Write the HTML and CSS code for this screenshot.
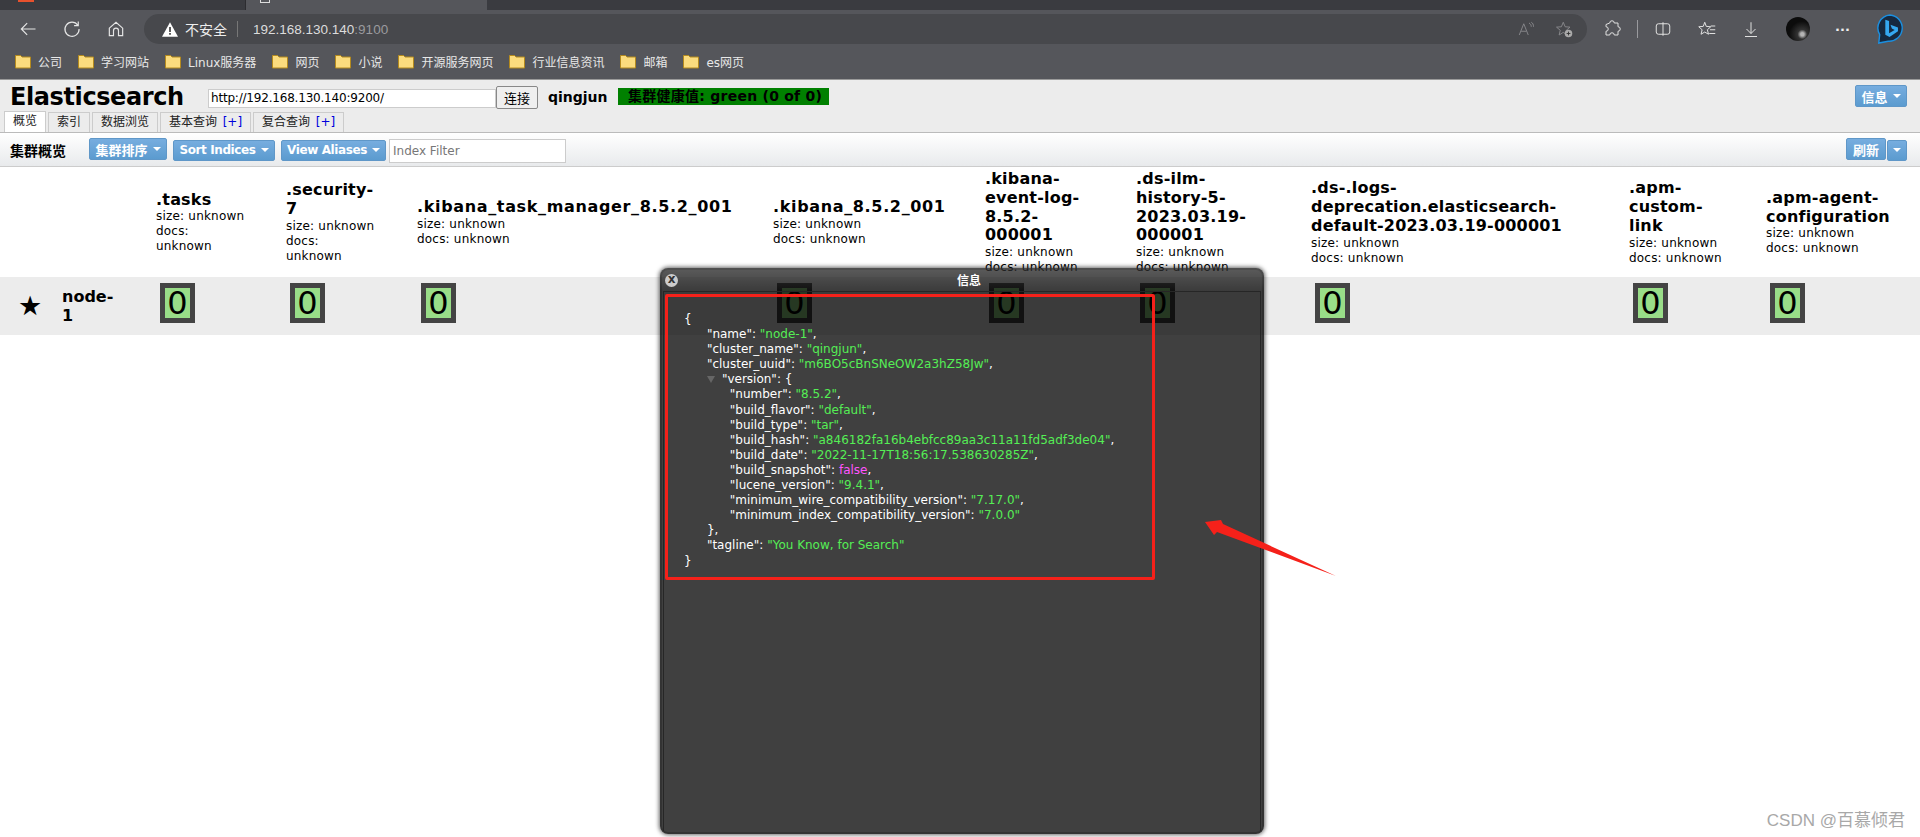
FILE: index.html
```html
<!DOCTYPE html>
<html lang="zh">
<head>
<meta charset="utf-8">
<title>Elasticsearch head</title>
<link rel="stylesheet" href="styles.css">
</head>
<body>
<div class="browser">
  <div class="tabstrip">
    <div class="tab-left"><span class="fav-red"></span></div>
    <div class="tab-active"><span class="fav-white"></span></div>
    <div class="tab-next"></div>
  </div>
  <div class="navbar">
    <svg class="nav-ico" viewBox="0 0 24 24"><path d="M21 12H4M11 5l-7 7 7 7"/></svg>
    <svg class="nav-ico" viewBox="0 0 24 24"><path d="M19 7.500A8.500 8.500 0 1 0 20.500 12M19.500 3v5h-5"/></svg>
    <svg class="nav-ico" viewBox="0 0 24 24"><path d="M4 11l8-7 8 7v9h-5v-6a3 3 0 0 0-6 0v6H4z"/></svg>
    <div class="omnibox">
      <svg class="warn" viewBox="0 0 20 18"><path d="M10 0l10 18H0z" fill="#fff"/><path d="M9 6h2v6H9zM9 13.500h2v2H9z" fill="#333"/></svg>
      <span class="insecure">不安全</span>
      <span class="omni-sep"></span>
      <span class="addr">192.168.130.140<span class="port">:9100</span></span>
      <span class="omni-grow"></span>
      <svg class="omni-ico" viewBox="0 0 24 24"><path d="M3 20L9 5l6 15M5.500 15h7M16 4c2 1 3 3 3 5M19 3c2 1 3 3 3 6"/></svg>
      <svg class="omni-ico omni-star" viewBox="0 0 24 24"><path d="M11 3l2.500 6 6.500.5-5 4.200L16.500 20 11 16.500 5.500 20l1.500-6.300-5-4.200L8.500 9z"/><circle cx="18" cy="18" r="5" fill="#aaa" stroke="none"/><path d="M18 15.500v5M15.500 18h5" stroke="#333"/></svg>
    </div>
    <div class="tools">
      <svg class="tool" viewBox="0 0 24 24"><path d="M9 4a3 3 0 0 1 6 0h5v5a3 3 0 0 1 0 6v5h-5a3 3 0 0 0-6 0H4v-5a3 3 0 0 0 0-6V6z"/></svg>
      <span class="tool-sep"></span>
      <svg class="tool" viewBox="0 0 24 24"><path d="M12 3v18M6 5h12a3 3 0 0 1 3 3v8a3 3 0 0 1-3 3H6a3 3 0 0 1-3-3V8a3 3 0 0 1 3-3z"/></svg>
      <svg class="tool" viewBox="0 0 24 24"><path d="M9 3l2 5.500 6 .5-4.500 4 1.500 6L9 16l-5 3 1.500-6L1 9l6-.5zM17 8h6M16 13h7M15 18h8"/></svg>
      <svg class="tool" viewBox="0 0 24 24"><path d="M12 3v15M6 12l6 6 6-6M4 22h16"/></svg>
      <span class="avatar"></span>
      <span class="dots">···</span>
      <svg class="bing" viewBox="0 0 32 32"><path d="M16 1a14 14 0 1 1-2 28l-10 2 1-9A14 14 0 0 1 16 1z" fill="#16293f" stroke="#1b8fe0" stroke-width="1.500"/><path d="M11 6l4 1.500v13l6-3.500-3-1.500-1.500-4 8 3v4l-9 6-4.500-2.500z" fill="#35a8f0"/></svg>
    </div>
  </div>
  <div class="bookmarks">
    <div class="bm"><svg class="folder" viewBox="0 0 16 16"><path d="M.5 4V2.500h5l1.500 1.500h8.500v11H.5z"/></svg><span>公司</span></div>
    <div class="bm"><svg class="folder" viewBox="0 0 16 16"><path d="M.5 4V2.500h5l1.500 1.500h8.500v11H.5z"/></svg><span>学习网站</span></div>
    <div class="bm"><svg class="folder" viewBox="0 0 16 16"><path d="M.5 4V2.500h5l1.500 1.500h8.500v11H.5z"/></svg><span>Linux服务器</span></div>
    <div class="bm"><svg class="folder" viewBox="0 0 16 16"><path d="M.5 4V2.500h5l1.500 1.500h8.500v11H.5z"/></svg><span>网页</span></div>
    <div class="bm"><svg class="folder" viewBox="0 0 16 16"><path d="M.5 4V2.500h5l1.500 1.500h8.500v11H.5z"/></svg><span>小说</span></div>
    <div class="bm"><svg class="folder" viewBox="0 0 16 16"><path d="M.5 4V2.500h5l1.500 1.500h8.500v11H.5z"/></svg><span>开源服务网页</span></div>
    <div class="bm"><svg class="folder" viewBox="0 0 16 16"><path d="M.5 4V2.500h5l1.500 1.500h8.500v11H.5z"/></svg><span>行业信息资讯</span></div>
    <div class="bm"><svg class="folder" viewBox="0 0 16 16"><path d="M.5 4V2.500h5l1.500 1.500h8.500v11H.5z"/></svg><span>邮箱</span></div>
    <div class="bm"><svg class="folder" viewBox="0 0 16 16"><path d="M.5 4V2.500h5l1.500 1.500h8.500v11H.5z"/></svg><span>es网页</span></div>
  </div>
</div>

<div class="app">
  <div class="head">
    <div class="head-top">
      <h1 class="brand">Elasticsearch</h1>
      <input class="url" type="text" value="http://192.168.130.140:9200/">
      <button class="connect">连接</button>
      <span class="cluster">qingjun</span>
      <span class="health">集群健康值: green (0 of 0)</span>
      <span class="grow"></span>
      <span class="btn btn-info">信息<i class="caret"></i></span>
    </div>
    <div class="tabs">
      <span class="tab active">概览</span>
      <span class="tab">索引</span>
      <span class="tab">数据浏览</span>
      <span class="tab">基本查询 <b class="plus">[+]</b></span>
      <span class="tab">复合查询 <b class="plus">[+]</b></span>
    </div>
  </div>
  <div class="toolbar">
    <span class="tb-label">集群概览</span>
    <span class="btn btn-first">集群排序<i class="caret"></i></span>
    <span class="btn btn-sort">Sort Indices<i class="caret"></i></span>
    <span class="btn btn-alias">View Aliases<i class="caret"></i></span>
    <input class="filter" type="text" placeholder="Index Filter">
    <span class="grow"></span>
    <span class="btn btn-refresh">刷新</span>
    <span class="btn btn-drop"><i class="caret"></i></span>
  </div>
  <table class="nodes">
    <colgroup>
      <col class="c0"><col class="c1"><col class="c2"><col class="c3"><col class="c4"><col class="c5"><col class="c6"><col class="c7"><col class="c8"><col class="c9"><col class="c10">
    </colgroup>
    <thead>
      <tr>
        <th colspan="2"></th>
        <th><h3>.tasks</h3><p>size: unknown<br>docs:<br>unknown</p></th>
        <th><h3>.security-<br>7</h3><p>size: unknown<br>docs:<br>unknown</p></th>
        <th><h3 class="wide">.kibana_task_manager_8.5.2_001</h3><p>size: unknown<br>docs: unknown</p></th>
        <th><h3 class="wide">.kibana_8.5.2_001</h3><p>size: unknown<br>docs: unknown</p></th>
        <th><h3>.kibana-<br>event-log-<br>8.5.2-<br>000001</h3><p>size: unknown<br>docs: unknown</p></th>
        <th><h3>.ds-ilm-<br>history-5-<br>2023.03.19-<br>000001</h3><p>size: unknown<br>docs: unknown</p></th>
        <th><h3>.ds-.logs-<br>deprecation.elasticsearch-<br>default-2023.03.19-000001</h3><p>size: unknown<br>docs: unknown</p></th>
        <th><h3>.apm-<br>custom-<br>link</h3><p>size: unknown<br>docs: unknown</p></th>
        <th><h3>.apm-agent-<br>configuration</h3><p>size: unknown<br>docs: unknown</p></th>
      </tr>
    </thead>
    <tbody>
      <tr>
        <td class="star">★</td>
        <td class="node">node-<br>1</td>
        <td><span class="shard">0</span></td>
        <td><span class="shard">0</span></td>
        <td><span class="shard">0</span></td>
        <td><span class="shard">0</span></td>
        <td><span class="shard">0</span></td>
        <td><span class="shard">0</span></td>
        <td><span class="shard">0</span></td>
        <td><span class="shard">0</span></td>
        <td><span class="shard">0</span></td>
      </tr>
    </tbody>
  </table>
</div>

<div class="dialog">
  <div class="dialog-title"><span class="close">x</span><span class="dialog-name">信息</span></div>
  <div class="dialog-body">
    <div class="red-box"></div>
<pre class="json">{
      "name": <s>"node-1"</s>,
      "cluster_name": <s>"qingjun"</s>,
      "cluster_uuid": <s>"m6BO5cBnSNeOW2a3hZ58Jw"</s>,
      <i class="tri"></i>"version": {
            "number": <s>"8.5.2"</s>,
            "build_flavor": <s>"default"</s>,
            "build_type": <s>"tar"</s>,
            "build_hash": <s>"a846182fa16b4ebfcc89aa3c11a11fd5adf3de04"</s>,
            "build_date": <s>"2022-11-17T18:56:17.538630285Z"</s>,
            "build_snapshot": <u>false</u>,
            "lucene_version": <s>"9.4.1"</s>,
            "minimum_wire_compatibility_version": <s>"7.17.0"</s>,
            "minimum_index_compatibility_version": <s>"7.0.0"</s>
      },
      "tagline": <s>"You Know, for Search"</s>
}</pre>
  </div>
</div>

<svg class="arrow" viewBox="0 0 140 64"><polygon points="1,6 17,4 19,8 132,60 13,16 10,19"/></svg>
<div class="mark">CSDN @百慕倾君</div>
</body>
</html>
```
FILE: styles.css
```css
* { box-sizing: border-box; }
html, body { margin: 0; padding: 0; height: 837px; overflow: hidden; background: #fff; }
body { font-family: "DejaVu Sans", "Noto Sans CJK SC", sans-serif; font-size: 12px; color: #000; position: relative; }

/* browser chrome */
.browser { background: #55565b; height: 80px; border-bottom: 1px solid #9a9a9a; }
.tabstrip { height: 10px; background: #3a3b40; display: flex; }
.tab-left { width: 246px; padding-left: 18px; border-right: 1px solid #2c2c30; }
.fav-red { display: block; width: 16px; height: 2px; background: #e8512d; }
.tab-active { width: 241px; background: #55565b; padding-left: 14px; }
.fav-white { display: block; width: 10px; height: 3px; border: 1px solid #ddd; border-top: 0; }
.tab-next { flex: 1; }
.navbar { height: 38px; display: flex; align-items: center; padding: 0 0 0 18px; }
.nav-ico { width: 20px; height: 20px; fill: none; stroke: #e6e6e6; stroke-width: 1.4; margin-right: 24px; flex: none; }
.omnibox { margin-left: -6px; width: 1443px; height: 30px; background: #47484c; border-radius: 15px; display: flex; align-items: center; padding: 0 12px 0 18px; flex: none; }
.warn { width: 16px; height: 15px; flex: none; }
.insecure { margin-left: 7px; color: #eee; font-size: 14px; }
.omni-sep { width: 1px; height: 16px; background: #777; margin: 0 15px 0 10px; }
.addr { font-family: "Liberation Sans", sans-serif; font-size: 13.500px; color: #dcdcdc; }
.port { color: #9a9a9e; }
.omni-grow { flex: 1; }
.omni-ico { width: 18px; height: 18px; fill: none; stroke: #8b8b8e; stroke-width: 1.2; margin-right: 20px; }
.omni-star { margin-right: 2px; }
.tools { display: flex; align-items: center; flex: 1; padding-left: 16px; }
.tool { width: 18px; height: 18px; fill: none; stroke: #e4e4e4; stroke-width: 1.3; flex: none; margin-right: 26px; }
.tool-sep { width: 1px; height: 18px; background: #9a9a9e; margin: 0 16px 0 -10px; flex: none; }
.avatar { width: 24px; height: 24px; border-radius: 50%; background: radial-gradient(circle at 68% 72%, #b5b5b5 0 7%, #333 20%, #0c0c0c 55%); flex: none; }
.dots { color: #eee; font-size: 13px; font-weight: bold; margin-left: 25px; width: 20px; flex: none; }
.bing { width: 30px; height: 32px; margin-left: 20px; flex: none; }
.bookmarks { height: 31px; display: flex; align-items: center; padding: 0 0 5px 15px; gap: 16px; }
.bm { display: flex; align-items: center; color: #e8e8e8; font-size: 12px; gap: 7px; }
.folder { width: 16px; height: 16px; fill: #fbdc7e; stroke: #b48a1e; stroke-width: 1; flex: none; }

/* head */
.head { background: #ececec; height: 53px; border-bottom: 1px solid #bbb; }
.head-top { height: 31px; display: flex; align-items: center; padding: 3px 13px 0 10px; }
.brand { margin: 0; font-size: 24px; font-weight: bold; width: 198px; letter-spacing: -.4px; flex: none; }
.url { width: 288px; height: 19px; padding: 1px 2px; border: 1px solid #ccc; background: #fff; font: 12px "DejaVu Sans", sans-serif; letter-spacing: -.2px; margin: 2px 0 0; }
.connect { width: 42px; height: 23px; padding: 0; border: 1px solid #888; border-radius: 2px; background: #efefef; font: 13px "Noto Sans CJK SC", sans-serif; }
.cluster { font-size: 14px; font-weight: bold; margin-left: 10px; width: 70px; flex: none; }
.health { background: #008000; color: #000; font-size: 14px; font-weight: bold; letter-spacing: .25px; width: 211px; height: 17px; line-height: 16px; padding-left: 10px; margin-top: -1px; white-space: nowrap; overflow: hidden; flex: none; }
.grow { flex: 1; }
.tabs { display: flex; gap: 2px; padding-left: 4px; height: 21px; align-items: flex-end; }
.tab { height: 20px; line-height: 19px; padding: 0 8px; background: #ececec; border: 1px solid #ccc; border-bottom: 0; font-size: 12px; color: #222; white-space: nowrap; }
.tab.active { background: #fff; height: 21px; }
.plus { font-weight: normal; color: #0000dd; margin-left: 1.800px; }

/* buttons */
.btn { display: inline-flex; align-items: center; justify-content: center; height: 21px; color: #fff; font-size: 13px; font-weight: bold; background: linear-gradient(#77addf, #5b9bcf); border: 1px solid #5f97c8; border-radius: 2px; white-space: nowrap; flex: none; }
.caret { display: inline-block; width: 0; height: 0; border: 4px solid transparent; border-top: 4px solid #fff; border-bottom: 0; margin-left: 5px; }
.btn-info { width: 52px; margin-top: -2px; height: 22px; }
.toolbar { height: 34px; display: flex; align-items: center; padding: 0 13px 0 10px; background: linear-gradient(#fff, #e8eaec); border-bottom: 1px solid #ccc; }
.tb-label { font-size: 14px; font-weight: bold; width: 79px; flex: none; }
.btn-first { width: 78px; height: 22px; margin: -1px 6px 0 0; }
.btn-sort { width: 102px; margin: 1px 6px 0 0; font-size: 12px; letter-spacing: -.4px; }
.btn-alias { width: 105px; margin: 1px 3px 0 0; font-size: 12px; letter-spacing: -.4px; }
.filter { width: 177px; height: 24px; padding: 1px 3px; border: 1px solid #ccc; background: #fff; font: 12px "DejaVu Sans", sans-serif; margin-top: 3px; }
.filter::placeholder { color: #777; }
.btn-refresh { width: 40px; height: 22px; margin: -1px 1px 0 0; }
.btn-drop { width: 20px; margin-top: 1px; }
.btn-drop .caret { margin: 0; }

/* table */
.nodes { table-layout: fixed; width: 1920px; border-collapse: collapse; }
.c0 { width: 58px; } .c1 { width: 94px; } .c2 { width: 130px; } .c3 { width: 131px; } .c4 { width: 356px; } .c5 { width: 212px; } .c6 { width: 151px; } .c7 { width: 175px; } .c8 { width: 318px; } .c9 { width: 137px; } .c10 { width: 158px; }
.nodes th { height: 110px; padding: 1px 4px 0; text-align: left; vertical-align: middle; font-weight: normal; overflow: visible; }
.nodes h3 { margin: 0; font-size: 16px; line-height: 18.700px; font-weight: bold; white-space: nowrap; letter-spacing: .2px; }
.nodes h3.wide { letter-spacing: .65px; }
.nodes p { margin: 0; font-size: 12px; line-height: 15px; white-space: nowrap; letter-spacing: .2px; }
.nodes tbody tr { background: #ececec; height: 58px; }
.nodes td { padding: 0 4px; vertical-align: top; }
.nodes td.star { font-size: 27px; text-align: left; line-height: 58px; padding: 0 0 0 18px; }
.nodes td.node { font-size: 16px; font-weight: bold; line-height: 19px; padding: 10px 0 0 4px; }
.shard { display: block; margin: 6px 0 0 4px; width: 35px; height: 40px; border: 5px solid #444; background: #99dd88; text-align: center; font-size: 32px; line-height: 30px; }

/* dialog */
.dialog { position: absolute; left: 660px; top: 268px; width: 604px; height: 566px; background: rgba(0,0,0,.75); border-radius: 8px; box-shadow: 0 0 4px 1px rgba(0,0,0,.6), inset 0 0 0 2px rgba(0,0,0,.2); color: #fff; }
.dialog-title { height: 23px; padding: 2px 0 0 14px; text-align: center; line-height: 22px; font-size: 12px; font-weight: bold; background: linear-gradient(rgba(255,255,255,.14), rgba(255,255,255,0)); border-radius: 8px 8px 0 0; }
.close { position: absolute; left: 5px; top: 6px; width: 13px; height: 13px; padding-left: 0; border-radius: 50%; background: #ccc; color: #333; line-height: 11px; font-size: 12px; }
.dialog-body { margin: 0 3px; padding: 20px 0 0 20px; border: 1px solid #262626; border-bottom: 0; height: 540px; }
.red-box { position: absolute; left: 5px; top: 26px; width: 490px; height: 286px; border: 3px solid #f5211a; border-radius: 2px; }
.json { margin: 0; font: 12px/15.100px "DejaVu Sans", sans-serif; color: #fff; position: relative; }
.json s { text-decoration: none; color: #55ee55; }
.json u { text-decoration: none; color: #ff55ff; }
.tri { display: inline-block; width: 0; height: 0; border: 4px solid transparent; border-top: 7px solid #666; border-bottom: 0; margin: 0 7px 0 0; }

/* annotation */
.arrow { position: absolute; left: 1204px; top: 516px; width: 140px; height: 64px; fill: #f5211a; }
.mark { position: absolute; right: 15px; bottom: 6px; font: 17px "Liberation Sans", "Noto Sans CJK SC", sans-serif; color: #a8a8a8; }
```
